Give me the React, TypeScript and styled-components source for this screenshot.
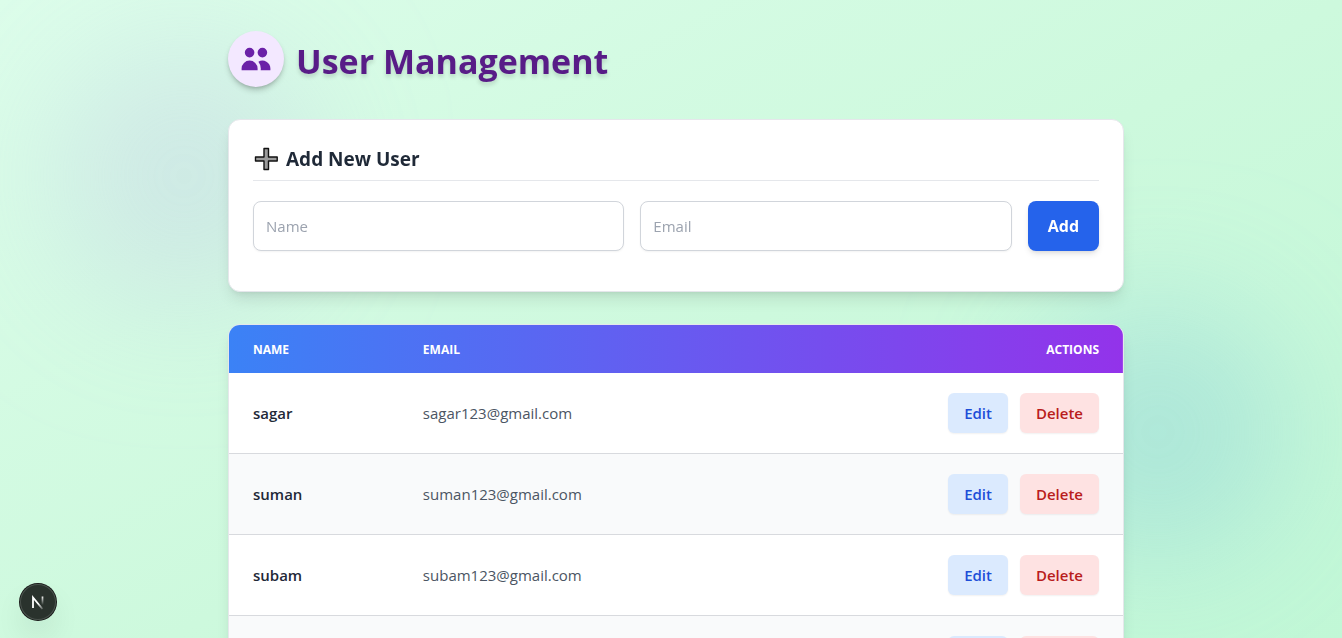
import React from "react";
import styled, { createGlobalStyle } from "styled-components";

const GlobalStyle = createGlobalStyle`
  *, *::before, *::after { box-sizing: border-box; }
  body {
    margin: 0;
    font-family: "Segoe UI", "Open Sans", "Noto Sans", sans-serif;
    font-size: 15px;
    line-height: 24px;
    color: #1f2937;
  }
  h1, h2 { margin: 0; }
  button, input { font: inherit; }
`;

const Page = styled.div`
  position: relative;
  min-height: 100vh;
  padding: 31px 24px 32px 34px;
  background: linear-gradient(to bottom right, #dcfdea, #cdf9dd, #bff7d5);
`;

const Glow = styled.div<{ $side: "left" | "right" }>`
  position: absolute;
  width: 256px;
  height: 256px;
  border-radius: 50%;
  filter: blur(64px);
  mix-blend-mode: multiply;
  ${({ $side }) =>
    $side === "left"
      ? "top: 48px; left: 56px; background: #d8b4fe; opacity: 0.25;"
      : "top: 304px; right: 56px; background: #93c5fd; opacity: 0.3;"}
`;

const Container = styled.main`
  position: relative;
  display: flex;
  flex-direction: column;
  gap: 32px;
  max-width: 896px;
  margin: 0 auto;
`;

const Header = styled.header`
  display: flex;
  align-items: center;
  gap: 12px;
`;

const IconDisc = styled.span`
  display: flex;
  padding: 12px;
  border-radius: 50%;
  background: #f3e8ff;
  color: #6b21a8;
  box-shadow: 0 4px 6px -1px rgba(0, 0, 0, 0.2), 0 2px 4px -2px rgba(0, 0, 0, 0.2);
`;

const PageTitle = styled.h1`
  padding-top: 4px;
  font-size: 34px;
  line-height: 40px;
  font-weight: 700;
  color: #581c87;
  text-shadow: 0 3px 4px rgba(0, 0, 0, 0.15);
`;

const Card = styled.section`
  border: 1px solid #e5e7eb;
  border-radius: 12px;
  background: #fff;
  box-shadow: 0 10px 15px -3px rgba(0, 0, 0, 0.1), 0 4px 6px -4px rgba(0, 0, 0, 0.1);
`;

const FormCard = styled(Card)`
  padding: 24px 24px 40px;
`;

const CardTitle = styled.h2`
  display: flex;
  align-items: center;
  gap: 8px;
  padding: 1px 0 7px;
  margin-bottom: 20px;
  border-bottom: 1px solid #e5e7eb;
  font-size: 19px;
  line-height: 28px;
  font-weight: 700;
`;

const Form = styled.form`
  display: flex;
  gap: 16px;
`;

const TextInput = styled.input`
  flex: 1;
  min-width: 0;
  height: 50px;
  padding: 12px;
  border: 1px solid #d1d5db;
  border-radius: 8px;
  background: #fff;
  color: #1f2937;
  box-shadow: 0 1px 2px rgba(0, 0, 0, 0.05);
  &::placeholder { color: #9ca3af; opacity: 1; }
`;

const AddButton = styled.button`
  padding: 0 20px;
  border: 0;
  border-radius: 8px;
  background: #2563eb;
  color: #fff;
  font-size: 16px;
  font-weight: 700;
  box-shadow: 0 4px 6px -1px rgba(0, 0, 0, 0.1), 0 2px 4px -2px rgba(0, 0, 0, 0.1);
`;

const TableCard = styled(Card)`
  overflow: hidden;
`;

const Table = styled.table`
  width: 100%;
  border-collapse: collapse;
  text-align: left;
`;

const HeadRow = styled.tr`
  background: linear-gradient(to right, #3b82f6, #9333ea);
  color: #fff;
`;

const HeadCell = styled.th<{ $width?: string; $end?: boolean }>`
  width: ${({ $width }) => $width ?? "auto"};
  padding: 17px 24px 15px;
  font-size: 12px;
  line-height: 16px;
  font-weight: 700;
  text-transform: uppercase;
  text-align: ${({ $end }) => ($end ? "right" : "left")};
`;

const BodyRow = styled.tr`
  background: #fff;
  border-bottom: 1px solid #d8dade;
  &:nth-child(even) { background: #f9fafb; }
`;

const Cell = styled.td<{ $strong?: boolean }>`
  padding: 20px 24px;
  font-weight: ${({ $strong }) => ($strong ? 600 : 400)};
  color: ${({ $strong }) => ($strong ? "#1f2937" : "#4b5563")};
`;

const Actions = styled.div`
  display: flex;
  justify-content: flex-end;
  gap: 12px;
`;

const ActionButton = styled.button<{ $danger?: boolean }>`
  height: 40px;
  padding: 0 16px;
  border: 0;
  border-radius: 6px;
  font-weight: 600;
  background: ${({ $danger }) => ($danger ? "#fee2e2" : "#dbeafe")};
  color: ${({ $danger }) => ($danger ? "#b91c1c" : "#1d4ed8")};
  box-shadow: 0 1px 2px rgba(0, 0, 0, 0.06);
`;

const DevButton = styled.button`
  position: fixed;
  left: 20px;
  bottom: 18px;
  display: flex;
  width: 36px;
  height: 36px;
  padding: 0;
  border: 0;
  border-radius: 50%;
  background: #2a322d;
  box-shadow: 0 0 0 1px #171717, inset 0 0 0 1px #4a524d, 0 16px 32px -8px rgba(0, 0, 0, 0.24);
`;

const UsersIcon = () => (
  <svg width="32" height="32" viewBox="0 0 20 20" fill="currentColor" aria-hidden="true">
    <path d="M9 6a3 3 0 11-6 0 3 3 0 016 0zM17 6a3 3 0 11-6 0 3 3 0 016 0zM12.93 17c.046-.327.07-.66.07-1a6.97 6.97 0 00-1.5-4.33A5 5 0 0119 16v1h-6.07zM6 11a5 5 0 015 5v1H1v-1a5 5 0 015-5z" />
  </svg>
);

const PlusIcon = () => (
  <svg width="25" height="24" viewBox="0 0 25 24" aria-hidden="true">
    <path
      d="M11 1.5h4.5v8.5h8.7v4h-8.7v8.5H11v-8.5H2.5v-4H11z"
      fill="#9b9b9b"
      stroke="#111"
      strokeWidth="1.4"
      strokeLinejoin="round"
    />
  </svg>
);

const NextMark = () => (
  <svg width="36" height="36" viewBox="0 0 36 36" fill="none" aria-hidden="true">
    <defs>
      <linearGradient id="diagonal" x1="19" y1="19" x2="24" y2="25" gradientUnits="userSpaceOnUse">
        <stop stopColor="#fff" />
        <stop offset="1" stopColor="#fff" stopOpacity="0.1" />
      </linearGradient>
      <linearGradient id="stem" x1="22" y1="12" x2="22" y2="21" gradientUnits="userSpaceOnUse">
        <stop stopColor="#fff" />
        <stop offset="1" stopColor="#fff" stopOpacity="0" />
      </linearGradient>
    </defs>
    <path d="M13 24V13.5L22.5 25" stroke="url(#diagonal)" strokeWidth="1.8" />
    <path d="M22.5 12.5V21" stroke="url(#stem)" strokeWidth="1.7" />
  </svg>
);

const users = ["sagar", "suman", "subam", "sujan"].map((name) => ({
  name,
  email: `${name}123@gmail.com`,
}));

export default function App() {
  return (
    <>
      <GlobalStyle />
      <Page>
        <Glow $side="left" />
        <Glow $side="right" />
        <Container>
          <Header>
            <IconDisc>
              <UsersIcon />
            </IconDisc>
            <PageTitle>User Management</PageTitle>
          </Header>
          <FormCard>
            <CardTitle>
              <PlusIcon />
              Add New User
            </CardTitle>
            <Form onSubmit={(event) => event.preventDefault()}>
              <TextInput type="text" placeholder="Name" aria-label="Name" />
              <TextInput type="email" placeholder="Email" aria-label="Email" />
              <AddButton type="submit">Add</AddButton>
            </Form>
          </FormCard>
          <TableCard>
            <Table>
              <thead>
                <HeadRow>
                  <HeadCell $width="19%">Name</HeadCell>
                  <HeadCell>Email</HeadCell>
                  <HeadCell $end>Actions</HeadCell>
                </HeadRow>
              </thead>
              <tbody>
                {users.map((user) => (
                  <BodyRow key={user.name}>
                    <Cell $strong>{user.name}</Cell>
                    <Cell>{user.email}</Cell>
                    <Cell>
                      <Actions>
                        <ActionButton type="button">Edit</ActionButton>
                        <ActionButton type="button" $danger>Delete</ActionButton>
                      </Actions>
                    </Cell>
                  </BodyRow>
                ))}
              </tbody>
            </Table>
          </TableCard>
        </Container>
        <DevButton type="button" aria-label="Open developer tools">
          <NextMark />
        </DevButton>
      </Page>
    </>
  );
}
